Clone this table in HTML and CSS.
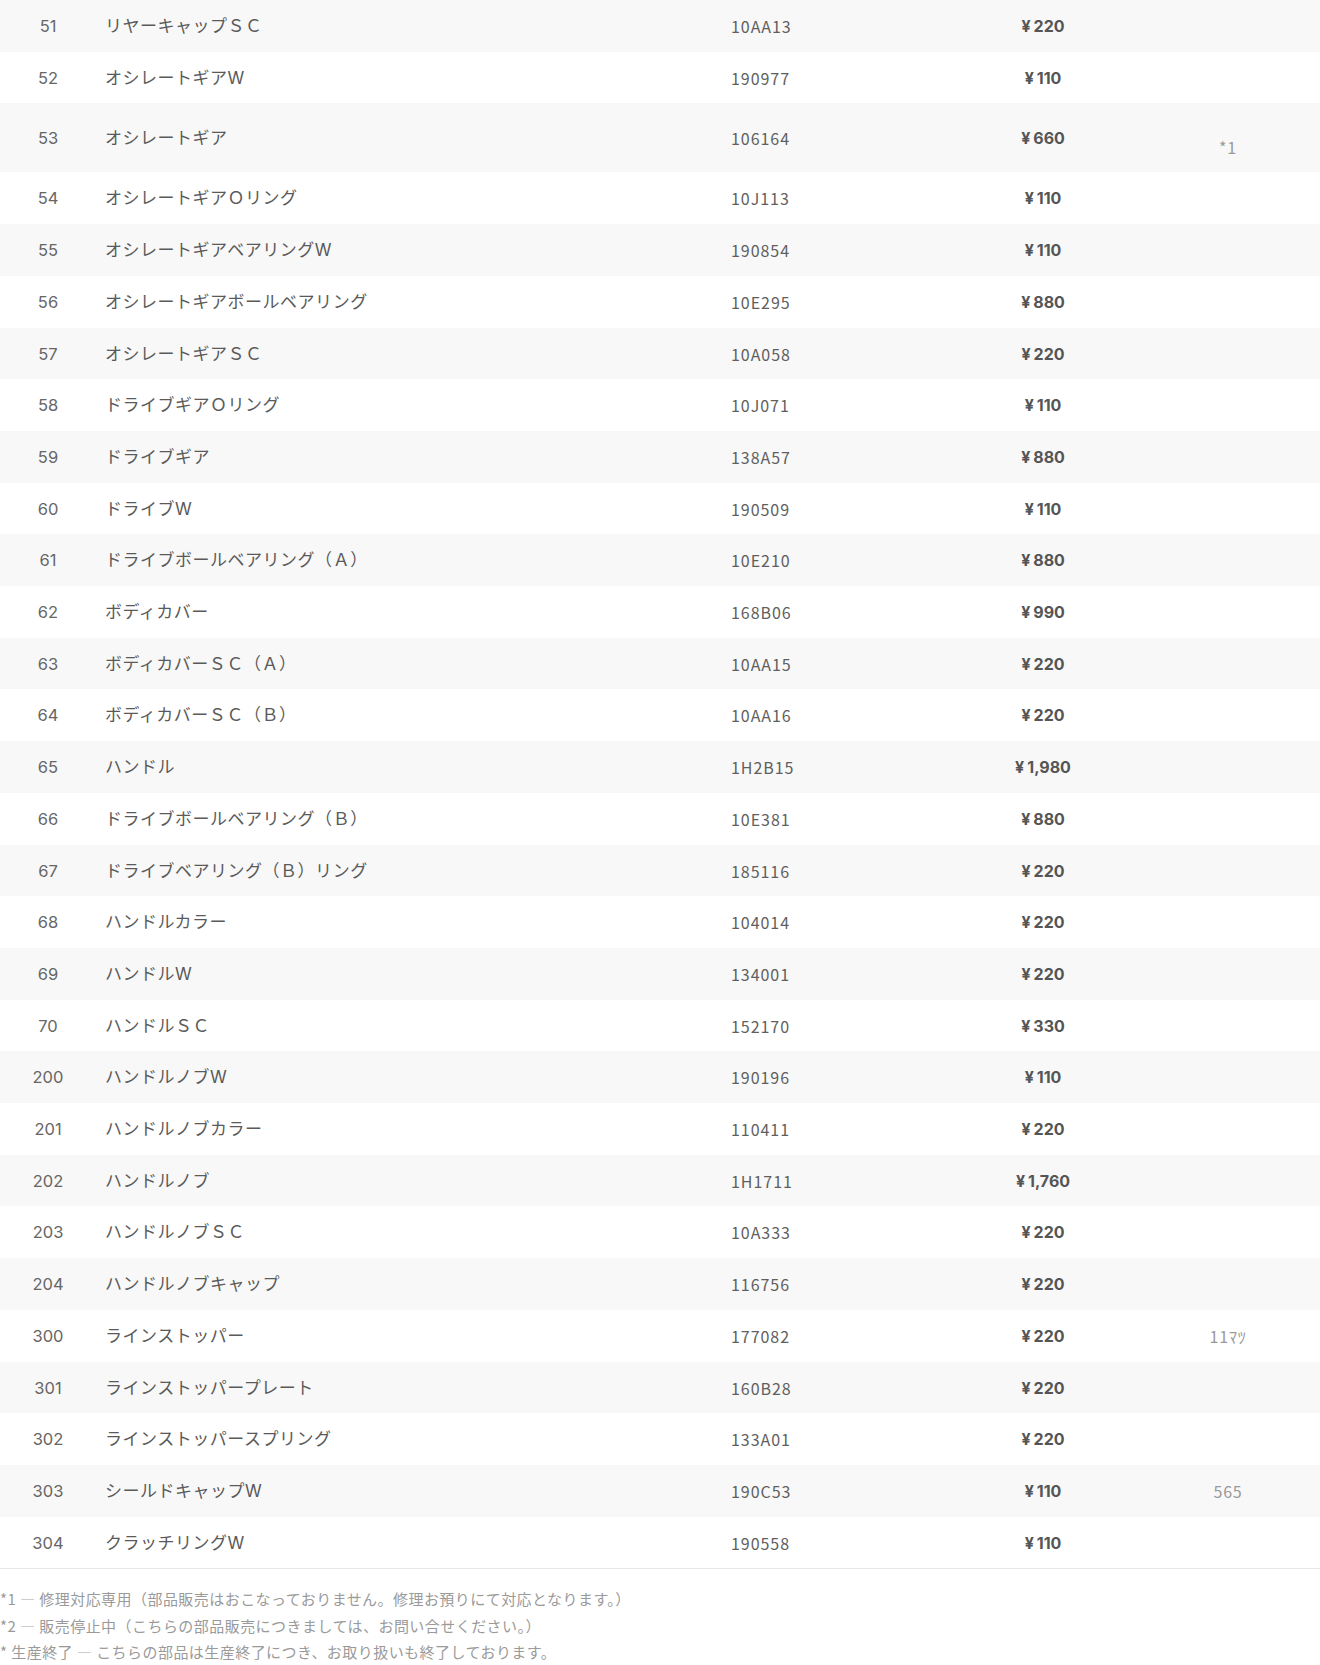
FILE: index.html
```html
<!DOCTYPE html>
<html lang="ja">
<head>
    <meta charset="UTF-8">
    <meta name="viewport" content="width=device-width, initial-scale=1.0">
    <title>パーツリスト</title>
    <link rel="stylesheet" href="styles.css">
</head>
<body>

<table class="parts">
    <colgroup>
        <col class="c-no"><col class="c-name"><col class="c-code"><col class="c-price"><col class="c-note">
    </colgroup>
    <tbody>
        <tr><td class="no">51</td><td class="name">リヤーキャップＳＣ</td><td class="code">10AA13</td><td class="price"><span class="yen">¥</span>220</td><td class="note"></td></tr>
        <tr><td class="no">52</td><td class="name">オシレートギアW</td><td class="code">190977</td><td class="price"><span class="yen">¥</span>110</td><td class="note"></td></tr>
        <tr><td class="no">53</td><td class="name">オシレートギア</td><td class="code">106164</td><td class="price"><span class="yen">¥</span>660</td><td class="note"><span class="low">*1</span></td></tr>
        <tr><td class="no">54</td><td class="name">オシレートギアＯリング</td><td class="code">10J113</td><td class="price"><span class="yen">¥</span>110</td><td class="note"></td></tr>
        <tr><td class="no">55</td><td class="name">オシレートギアベアリングW</td><td class="code">190854</td><td class="price"><span class="yen">¥</span>110</td><td class="note"></td></tr>
        <tr><td class="no">56</td><td class="name">オシレートギアボールベアリング</td><td class="code">10E295</td><td class="price"><span class="yen">¥</span>880</td><td class="note"></td></tr>
        <tr><td class="no">57</td><td class="name">オシレートギアＳＣ</td><td class="code">10A058</td><td class="price"><span class="yen">¥</span>220</td><td class="note"></td></tr>
        <tr><td class="no">58</td><td class="name">ドライブギアＯリング</td><td class="code">10J071</td><td class="price"><span class="yen">¥</span>110</td><td class="note"></td></tr>
        <tr><td class="no">59</td><td class="name">ドライブギア</td><td class="code">138A57</td><td class="price"><span class="yen">¥</span>880</td><td class="note"></td></tr>
        <tr><td class="no">60</td><td class="name">ドライブW</td><td class="code">190509</td><td class="price"><span class="yen">¥</span>110</td><td class="note"></td></tr>
        <tr><td class="no">61</td><td class="name">ドライブボールベアリング（Ａ）</td><td class="code">10E210</td><td class="price"><span class="yen">¥</span>880</td><td class="note"></td></tr>
        <tr><td class="no">62</td><td class="name">ボディカバー</td><td class="code">168B06</td><td class="price"><span class="yen">¥</span>990</td><td class="note"></td></tr>
        <tr><td class="no">63</td><td class="name">ボディカバーＳＣ（Ａ）</td><td class="code">10AA15</td><td class="price"><span class="yen">¥</span>220</td><td class="note"></td></tr>
        <tr><td class="no">64</td><td class="name">ボディカバーＳＣ（Ｂ）</td><td class="code">10AA16</td><td class="price"><span class="yen">¥</span>220</td><td class="note"></td></tr>
        <tr><td class="no">65</td><td class="name">ハンドル</td><td class="code">1H2B15</td><td class="price"><span class="yen">¥</span>1,980</td><td class="note"></td></tr>
        <tr><td class="no">66</td><td class="name">ドライブボールベアリング（Ｂ）</td><td class="code">10E381</td><td class="price"><span class="yen">¥</span>880</td><td class="note"></td></tr>
        <tr><td class="no">67</td><td class="name">ドライブベアリング（Ｂ）リング</td><td class="code">185116</td><td class="price"><span class="yen">¥</span>220</td><td class="note"></td></tr>
        <tr><td class="no">68</td><td class="name">ハンドルカラー</td><td class="code">104014</td><td class="price"><span class="yen">¥</span>220</td><td class="note"></td></tr>
        <tr><td class="no">69</td><td class="name">ハンドルW</td><td class="code">134001</td><td class="price"><span class="yen">¥</span>220</td><td class="note"></td></tr>
        <tr><td class="no">70</td><td class="name">ハンドルＳＣ</td><td class="code">152170</td><td class="price"><span class="yen">¥</span>330</td><td class="note"></td></tr>
        <tr><td class="no">200</td><td class="name">ハンドルノブW</td><td class="code">190196</td><td class="price"><span class="yen">¥</span>110</td><td class="note"></td></tr>
        <tr><td class="no">201</td><td class="name">ハンドルノブカラー</td><td class="code">110411</td><td class="price"><span class="yen">¥</span>220</td><td class="note"></td></tr>
        <tr><td class="no">202</td><td class="name">ハンドルノブ</td><td class="code">1H1711</td><td class="price"><span class="yen">¥</span>1,760</td><td class="note"></td></tr>
        <tr><td class="no">203</td><td class="name">ハンドルノブＳＣ</td><td class="code">10A333</td><td class="price"><span class="yen">¥</span>220</td><td class="note"></td></tr>
        <tr><td class="no">204</td><td class="name">ハンドルノブキャップ</td><td class="code">116756</td><td class="price"><span class="yen">¥</span>220</td><td class="note"></td></tr>
        <tr><td class="no">300</td><td class="name">ラインストッパー</td><td class="code">177082</td><td class="price"><span class="yen">¥</span>220</td><td class="note">11ﾏﾂ</td></tr>
        <tr><td class="no">301</td><td class="name">ラインストッパープレート</td><td class="code">160B28</td><td class="price"><span class="yen">¥</span>220</td><td class="note"></td></tr>
        <tr><td class="no">302</td><td class="name">ラインストッパースプリング</td><td class="code">133A01</td><td class="price"><span class="yen">¥</span>220</td><td class="note"></td></tr>
        <tr><td class="no">303</td><td class="name">シールドキャップW</td><td class="code">190C53</td><td class="price"><span class="yen">¥</span>110</td><td class="note">565</td></tr>
        <tr><td class="no">304</td><td class="name">クラッチリングW</td><td class="code">190558</td><td class="price"><span class="yen">¥</span>110</td><td class="note"></td></tr>
    </tbody>
</table>

<div class="notes">
    <p>*1 <span class="dash">—</span> 修理対応専用（部品販売はおこなっておりません。修理お預りにて対応となります。）</p>
    <p>*2 <span class="dash">—</span> 販売停止中（こちらの部品販売につきましては、お問い合せください。）</p>
    <p>* 生産終了 <span class="dash">—</span> こちらの部品は生産終了につき、お取り扱いも終了しております。</p>
</div>

</body>
</html>
```

FILE: styles.css
```css
body { margin: 0; background: #fff; color: #666; font-family: Inter, "Noto Sans CJK JP", sans-serif; font-size: 16px; }

.parts { width: 100%; border-collapse: collapse; table-layout: fixed; border-bottom: 1px solid #e6e6e6; }
.c-no { width: 96px; }
.c-name { width: 635px; }
.c-code { width: 219px; }
.c-price { width: 186px; }
.parts td { padding: 16px 0 14px; line-height: 21.7px; vertical-align: middle; white-space: nowrap; }
.parts tr:nth-child(odd) { background: #f8f8f8; }

.no { text-align: center; color: #666; font-size: 16.5px; }
.name { padding-left: 9px !important; color: #5a5a5a; font-size: 17px; letter-spacing: 0.03em; }
.code { font-family: "Noto Sans CJK JP", sans-serif; color: #5f5f5f; letter-spacing: 0.06em; }
.price { text-align: center; font-weight: bold; color: #555; }
.yen { margin-right: 3px; }
.note { text-align: center; font-family: "Noto Sans CJK JP", sans-serif; color: #999; letter-spacing: 0.05em; }
.note .low { display: inline-block; margin-top: 17.3px; }

/* 注記 */
.notes { padding-top: 17px; font-family: "Noto Sans CJK JP", sans-serif; font-size: 15px; color: #9a9a9a; letter-spacing: 0.03em; }
.notes p { margin: 0; line-height: 26.5px; }
.dash { color: #c4c4c4; }
```
